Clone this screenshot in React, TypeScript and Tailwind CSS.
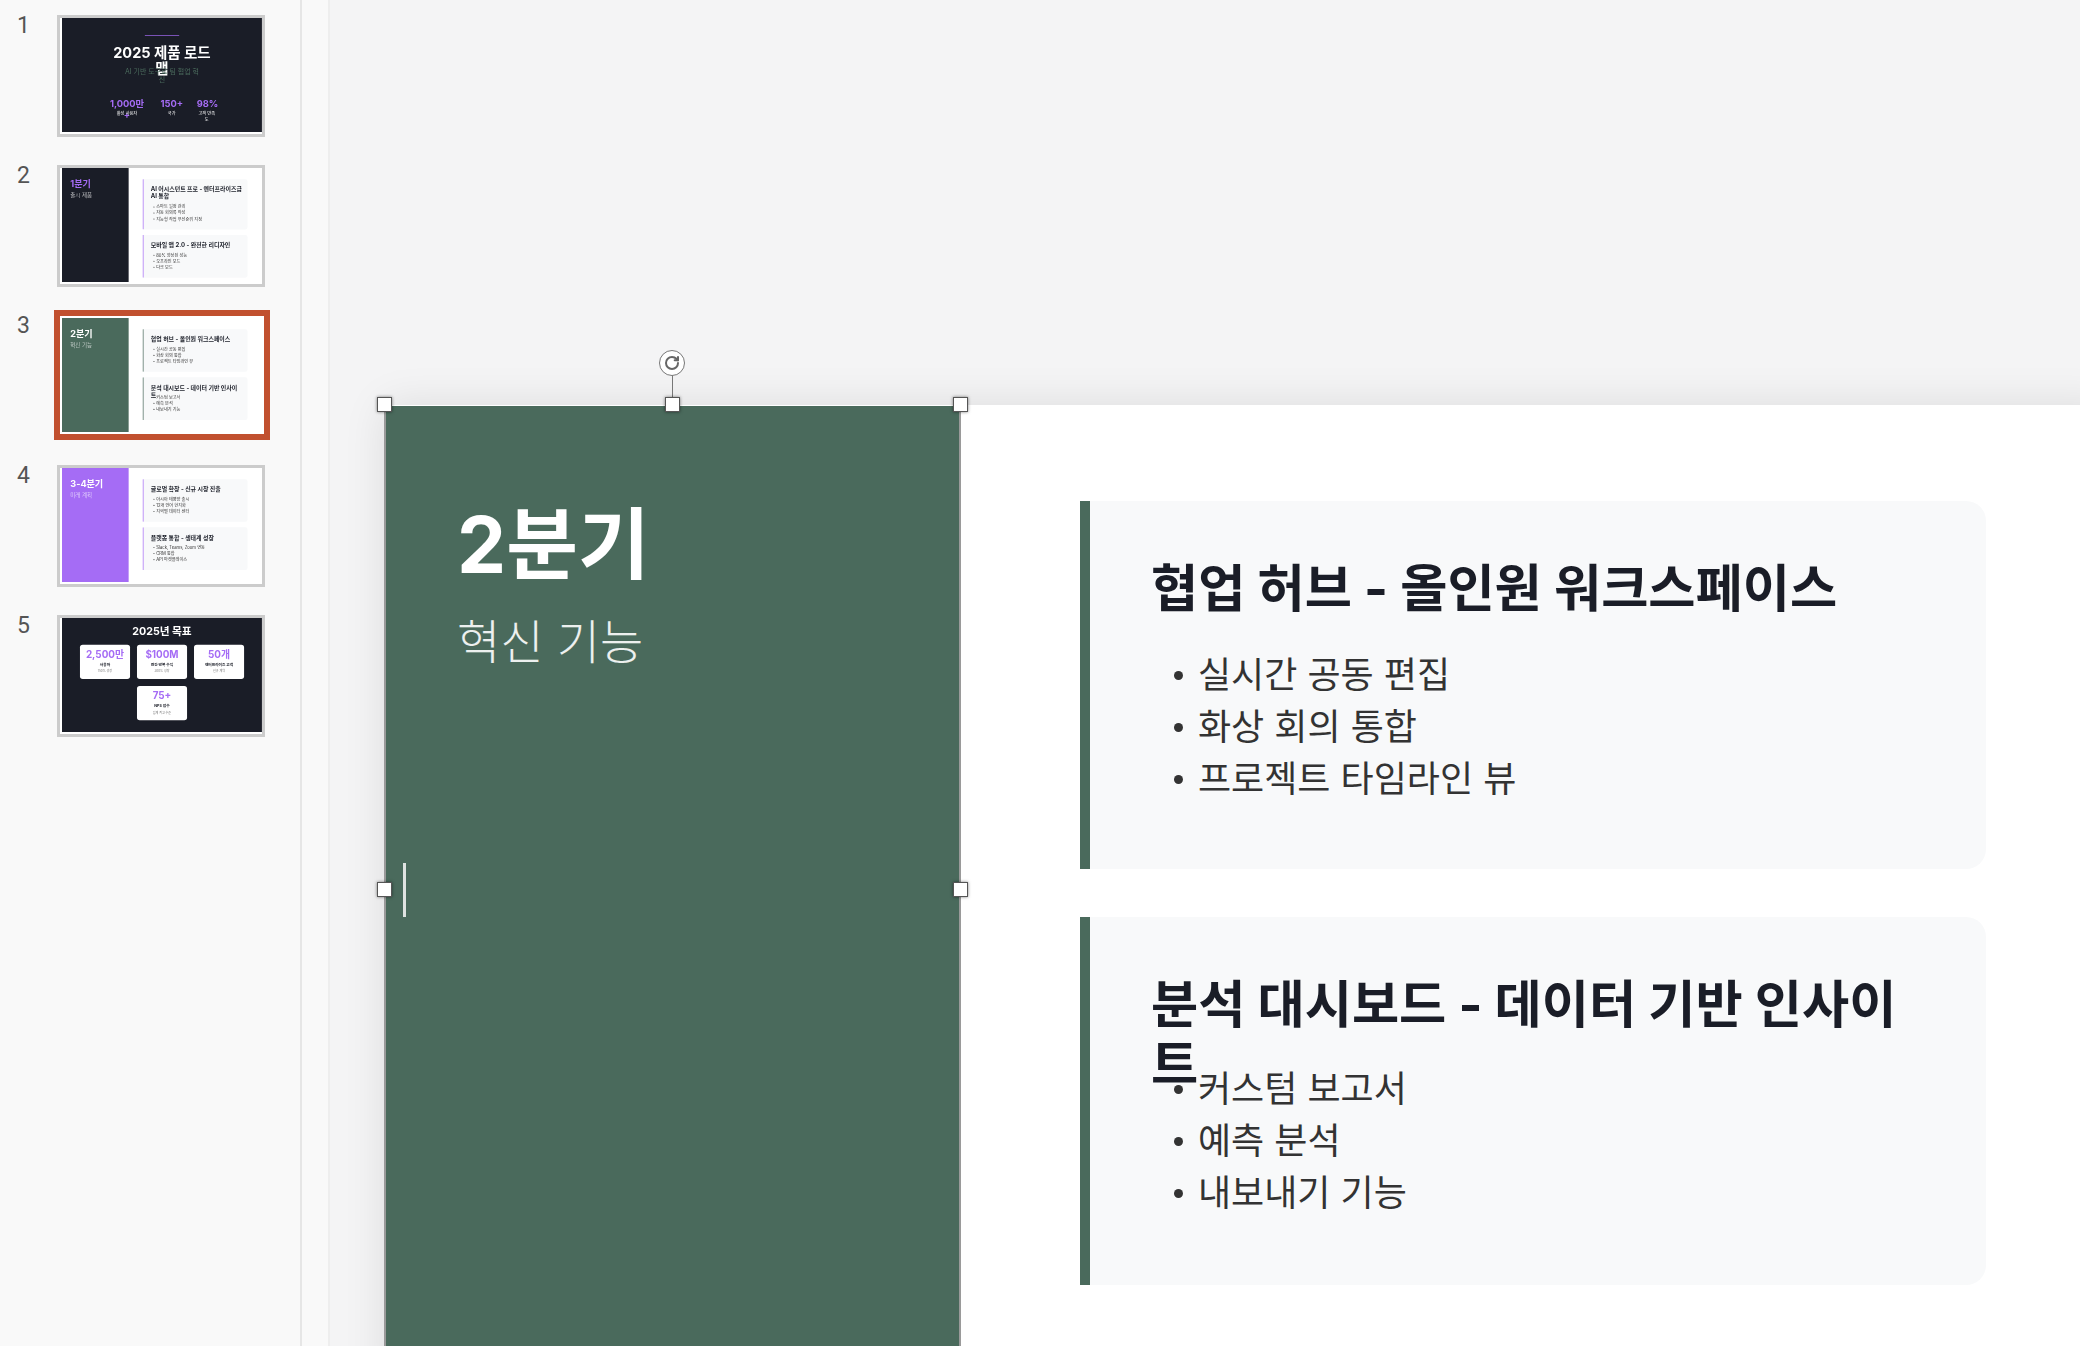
import React from "react";
import { RotateCw } from "lucide-react";

const font = "font-['Inter','Noto_Sans_CJK_KR',sans-serif]";

type CardData = { title: string; items: string[]; titleClass?: string };

function Card({ title, items, accent, tall, titleClass = "h-[60px]" }: CardData & { accent: string; tall?: boolean }) {
  return (
    <div className={`w-[906px] ${tall ? "h-[434px]" : "h-[368px]"} bg-[#f8f9fa] border-l-[10px] ${accent} rounded-r-[20px] pl-[61px] pr-[60px] pt-[57px]`}>
      <h3 className={`${titleClass} text-[51.3px] leading-[60px] font-bold text-[#1a1d27]`}>{title}</h3>
      <ul className="mt-[31px] pl-[23px] text-[36px] leading-[52px] text-[#333333]">
        {items.map((item) => (
          <li key={item} className="flex items-center gap-[15px]">
            <span className="w-[9px] h-[9px] rounded-full bg-[#333333]" />
            {item}
          </li>
        ))}
      </ul>
    </div>
  );
}

function SplitSlide({ panel, heading, headingColor, sub, accent, cards, tallFirst }: {
  panel: string;
  heading: string;
  headingColor: string;
  sub: string;
  accent: string;
  cards: CardData[];
  tallFirst?: boolean;
}) {
  return (
    <div className={`w-[1725px] h-[984px] flex bg-white ${font}`}>
      <div className={`w-[575px] h-full shrink-0 ${panel} pl-[72px] pt-[92px]`}>
        <h2 className={`text-[78px] leading-[96px] font-bold ${headingColor}`}>{heading}</h2>
        <p className="mt-[21px] text-[47px] leading-[56px] font-light text-white/90">{sub}</p>
      </div>
      <div className="pl-[120px] pt-[96px] flex flex-col gap-[48px]">
        {cards.map((card, i) => (
          <Card key={card.title} {...card} accent={accent} tall={tallFirst && i === 0} />
        ))}
      </div>
    </div>
  );
}

function TitleSlide() {
  const stats = [
    { value: "1,000만+", label: "활성 사용자", w: "w-[320px] mx-[10px]" },
    { value: "150+", label: "국가", w: "w-[240px]" },
    { value: "98%", label: "고객 만족도", w: "w-[172px]" },
  ];
  return (
    <div className={`w-[1725px] h-[984px] bg-[#1a1d27] flex flex-col items-center pt-[148px] ${font}`}>
      <div className="w-[296px] h-[6px] bg-[#a56cf5]" />
      <h1 className="mt-[83px] w-[900px] h-[131px] text-center text-[125px] leading-[131px] font-bold text-white">2025 제품 로드맵</h1>
      <p className="mt-[63px] w-[640px] h-[138px] text-center text-[60px] leading-[69px] text-[#4a6a5c]">AI 기반 도구로 팀 협업 혁신</p>
      <div className="mt-[116px] flex gap-[96px]">
        {stats.map((s) => (
          <div key={s.value} className={`${s.w} text-center`}>
            <div className="h-[100px] text-[80px] leading-[100px] font-bold text-[#a56cf5]">{s.value}</div>
            <div className="mt-[17px] text-[36px] leading-[52px] text-white">{s.label}</div>
          </div>
        ))}
      </div>
    </div>
  );
}

function GoalsSlide() {
  const goals = [
    { value: "2,500만", label: "사용자", note: "150% 성장" },
    { value: "$100M", label: "연간 반복 수익", note: "300% 성장" },
    { value: "50개", label: "엔터프라이즈 고객", note: "신규 계약" },
  ];
  const last = { value: "75+", label: "NPS 점수", note: "업계 최고 수준" };
  const box = (g: { value: string; label: string; note: string }) => (
    <div key={g.value} className="w-[432px] h-[296px] bg-white rounded-[24px] flex flex-col items-center pt-[39px]">
      <div className="text-[85px] leading-[96px] font-bold text-[#a56cf5]">{g.value}</div>
      <div className="mt-[17px] text-[32px] leading-[40px] font-bold text-[#1a1d27] whitespace-nowrap">{g.label}</div>
      <div className="mt-[22px] text-[26px] leading-[32px] text-[#777777]">{g.note}</div>
    </div>
  );
  return (
    <div className={`w-[1725px] h-[984px] bg-[#1a1d27] flex flex-col items-center pt-[60px] ${font}`}>
      <h2 className="text-[92px] leading-[104px] font-bold text-white">2025년 목표</h2>
      <div className="mt-[66px] grid grid-cols-[432px_432px_432px] gap-[60px]">
        {goals.map(box)}
        <div />
        {box(last)}
      </div>
    </div>
  );
}

const purple = "border-[#a56cf5]";
const green = "border-[#4a6a5c]";

const slides = [
  <TitleSlide />,
  <SplitSlide
    panel="bg-[#1a1d27]"
    heading="1분기"
    headingColor="text-[#a56cf5]"
    sub="출시 제품"
    accent={purple}
    tallFirst
    cards={[
      { title: "AI 어시스턴트 프로 - 엔터프라이즈급\nAI 통합", titleClass: "h-[126px] whitespace-pre", items: ["스마트 일정 관리", "자동 회의록 작성", "지능형 작업 우선순위 지정"] },
      { title: "모바일 앱 2.0 - 완전한 리디자인", items: ["80% 향상된 성능", "오프라인 모드", "다크 모드"] },
    ]}
  />,
  <SplitSlide
    panel="bg-[#4a6a5c]"
    heading="2분기"
    headingColor="text-white"
    sub="혁신 기능"
    accent={green}
    cards={[
      { title: "협업 허브 - 올인원 워크스페이스", items: ["실시간 공동 편집", "화상 회의 통합", "프로젝트 타임라인 뷰"] },
      { title: "분석 대시보드 - 데이터 기반 인사이트", titleClass: "h-[58px]", items: ["커스텀 보고서", "예측 분석", "내보내기 기능"] },
    ]}
  />,
  <SplitSlide
    panel="bg-[#a56cf5]"
    heading="3-4분기"
    headingColor="text-white"
    sub="미래 계획"
    accent={purple}
    cards={[
      { title: "글로벌 확장 - 신규 시장 진출", items: ["아시아 태평양 출시", "12개 언어 현지화", "지역별 데이터 센터"] },
      { title: "플랫폼 통합 - 생태계 성장", items: ["Slack, Teams, Zoom 연동", "CRM 통합", "API 마켓플레이스"] },
    ]}
  />,
  <GoalsSlide />,
];

function Thumb({ index }: { index: number }) {
  const active = index === 2;
  return (
    <div className="h-[150px] flex items-start">
      <span className="w-[57px] pl-[17px] pt-[12px] text-[23px] leading-[28px] text-[#555555] font-['Roboto',sans-serif]">{index + 1}</span>
      <div className={active
        ? "-ml-[3px] mt-[10px] border-[6px] border-[#c1502f] bg-white p-[2px]"
        : "mt-[15px] border-[3px] border-[#cccccc] bg-white pb-[2px] pl-[2px]"}>
        <div className="w-[200px] h-[114px] overflow-hidden blur-[0.3px]">
          <div className="w-[1725px] h-[984px] origin-top-left scale-[0.1159]">{slides[index]}</div>
        </div>
      </div>
    </div>
  );
}

function Handle({ className }: { className: string }) {
  return <div className={`absolute w-[15px] h-[15px] bg-white border border-[#555555] shadow-[0_0_3px_rgba(0,0,0,0.5)] ${className}`} />;
}

export default function App() {
  return (
    <div className="w-[2080px] h-[1346px] overflow-hidden flex bg-[#f9f9f9]">
      <aside className="w-[302px] shrink-0 border-r-2 border-[#e6e6e6]">
        {slides.map((_, i) => (
          <Thumb key={i} index={i} />
        ))}
      </aside>
      <div className="w-[28px] shrink-0 border-r-2 border-[#eeeeee] bg-[#f9f9f9]" />
      <main className="flex-1 min-w-0 bg-[#f4f4f5] pl-[55px] pt-[405px] overflow-hidden">
        <div className="relative w-[1725px] h-[984px] shadow-[0_0_40px_rgba(0,0,0,0.1)]">
          {slides[2]}
          <div className="absolute left-[-1px] top-0 w-[577px] h-[984px] border-x-2 border-x-[#9a9a9a] border-t border-t-white" />
          <div className="absolute left-[18px] top-[458px] w-[3px] h-[54px] bg-[#dfe3e1]" />
          <div className="absolute left-[287px] top-[-30px] w-[1px] h-[30px] bg-[#777777]" />
          <div className="absolute left-[274px] top-[-55px] w-[26px] h-[26px] rounded-full bg-white border border-[#777777] flex items-center justify-center">
            <RotateCw size={16} strokeWidth={3} color="#666666" />
          </div>
          <Handle className="left-[-8px] top-[-8px]" />
          <Handle className="left-[280px] top-[-8px]" />
          <Handle className="left-[568px] top-[-8px]" />
          <Handle className="left-[-8px] top-[477px]" />
          <Handle className="left-[568px] top-[477px]" />
        </div>
      </main>
    </div>
  );
}
